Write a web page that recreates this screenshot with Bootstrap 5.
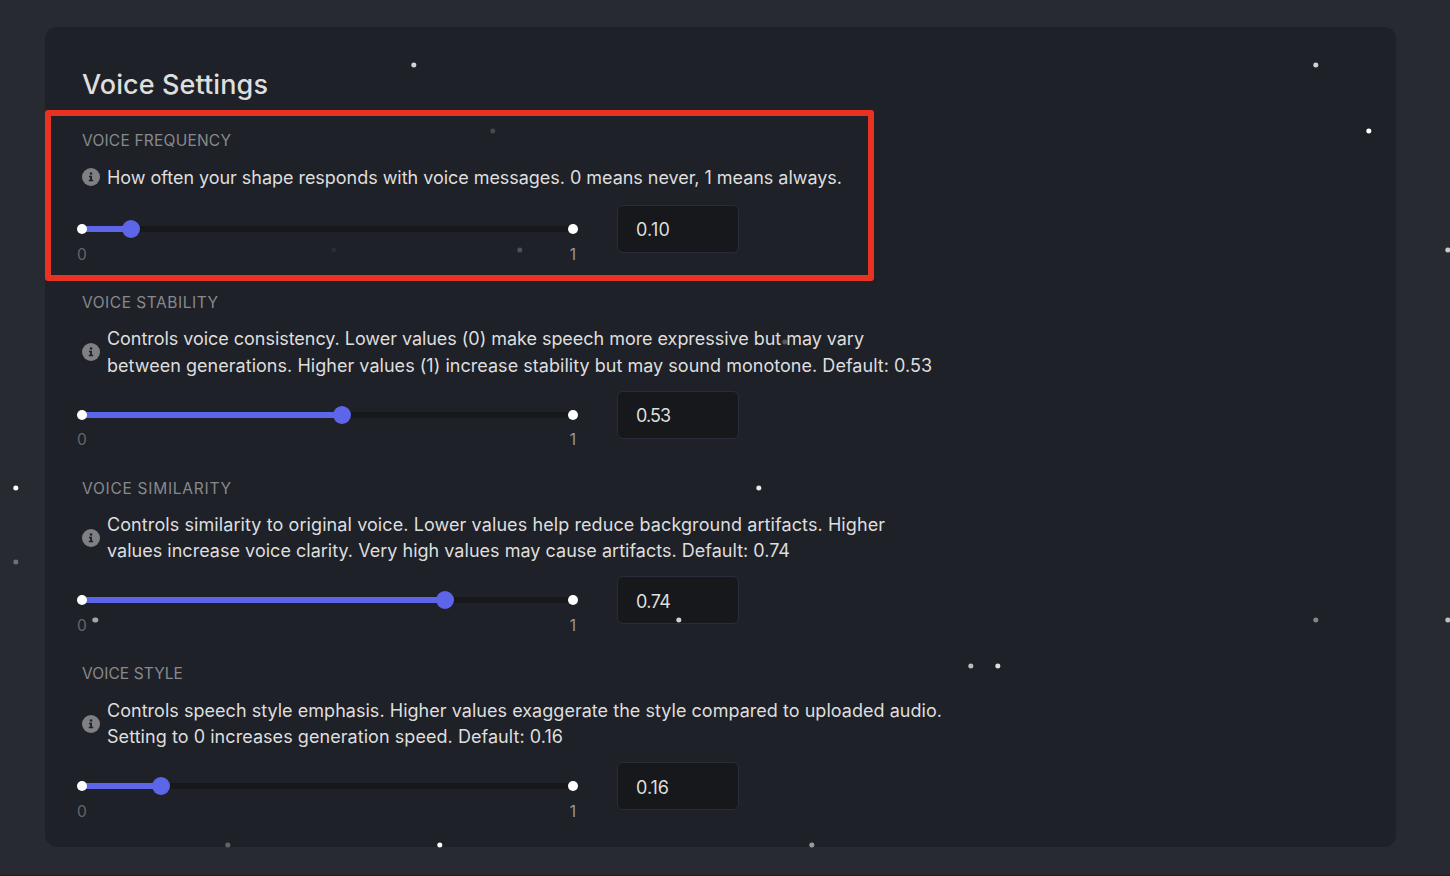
<!DOCTYPE html>
<html lang="en" data-bs-theme="dark">
<head>
<meta charset="utf-8">
<meta name="viewport" content="width=device-width, initial-scale=1">
<title>Voice Settings</title>
<link href="https://cdn.jsdelivr.net/npm/bootstrap@5.3.0/dist/css/bootstrap.min.css" rel="stylesheet">
<style>
  body { background: #282a32; color: #dedede; font-family: Inter, Lato, sans-serif; height: 876px; overflow: hidden; }
  .page { height: 876px; padding: 27px 54px 29px 45px; border-bottom: 1px solid #21192a; }
  .panel { background: #1f2128; border-radius: 12px; padding: 38px 37px 0; height: 820px; }
  .panel-title { font-size: 27px; font-weight: 500; line-height: 40px; letter-spacing: .1px; margin: 0 0 26px; color: #dedede; }
  .setting { margin-bottom: 39.7px; }
  .setting-label { font-size: 15.5px; line-height: 20px; color: #88898c; margin-bottom: 12.5px; }
  .hint { gap: 7px; font-size: 18px; line-height: 26.4px; margin-bottom: 11.6px; }
  .hint-text { padding-top: 1px; }
  .first .hint { margin-bottom: 14px; }
  .first { margin-bottom: 40px; }
  .hint svg { width: 18px; height: 18px; }
  .hint span { display: block; white-space: nowrap; }
  .controls { gap: 44px; height: 48px; }
  .slider { width: 491px; height: 6px; background: #17181c; }
  .slider-fill { height: 6px; background: #5d65e8; }
  .knob { width: 18px; height: 18px; background: #5d65e8; }
  .stop { width: 10px; height: 10px; background: #fff; }
  .stop-label { font-size: 15.5px; line-height: 20px; top: 18.6px; }
  .value-box { width: 122px; height: 48px; padding: 2px 18px 0; font-size: 18px; background: #17181c; color: #dedede; border: 1px solid #2a2d39; border-radius: 6px; }
  .highlight { left: -37px; top: -21px; width: 829px; height: 171px; border: 6px solid #ea3223; border-radius: 3px; }
  .star { width: 5.4px; height: 5px; background: #fff; border-radius: 50%; transform: translate(-50%, -50%); }
</style>
</head>
<body>
<main class="page position-relative">
  <section class="panel">
    <h1 class="panel-title">Voice Settings</h1>
    <div id="settings"></div>
  </section>
  <div id="stars"></div>
</main>
<script src="https://cdn.jsdelivr.net/npm/bootstrap@5.3.0/dist/js/bootstrap.bundle.min.js"></script>
<script>
  // Each line of copy carries its own tracking in px.
  const settings = [
    { label: ['VOICE FREQUENCY', .22], value: .10, tracking: .2, lines: [['How often your shape responds with voice messages. 0 means never, 1 means always.', -.037]] },
    { label: ['VOICE STABILITY', .53], value: .53, tracking: -.9, lines: [['Controls voice consistency. Lower values (0) make speech more expressive but may vary', -.039], ['between generations. Higher values (1) increase stability but may sound monotone. Default: 0.53', .031]] },
    { label: ['VOICE SIMILARITY', .74], value: .74, tracking: -.6, lines: [['Controls similarity to original voice. Lower values help reduce background artifacts. Higher', .089], ['values increase voice clarity. Very high values may cause artifacts. Default: 0.74', .02]] },
    { label: ['VOICE STYLE', .09], value: .16, tracking: 0, lines: [['Controls speech style emphasis. Higher values exaggerate the style compared to uploaded audio.', .033], ['Setting to 0 increases generation speed. Default: 0.16', .056]] }
  ];
  const info = '<svg class="flex-shrink-0" viewBox="0 0 18 18" aria-hidden="true"><circle cx="9" cy="9" r="9" fill="#7f8084"/><circle cx="9" cy="5.5" r="1.25" fill="#1f2128"/><path d="M7 7.7h3v4h1.2v1.6H6.8v-1.6h1.3V9.3H7z" fill="#1f2128"/></svg>';
  const dot = 'position-absolute top-50 translate-middle rounded-circle';
  document.getElementById('settings').innerHTML = settings.map((s, i) => `
    <div class="setting position-relative ${i ? '' : 'first'}">
      <div class="setting-label" style="letter-spacing:${s.label[1]}px">${s.label[0]}</div>
      <div class="hint d-flex align-items-center">${info}<div class="hint-text">${s.lines.map(l => `<span style="letter-spacing:${l[1]}px">${l[0]}</span>`).join('')}</div></div>
      <div class="controls d-flex align-items-center">
        <div class="slider position-relative">
          <div class="slider-fill" style="width:${s.value * 100}%"></div>
          <span class="stop start-0 ${dot}"></span><span class="stop start-100 ${dot}"></span>
          <span class="knob ${dot}" style="left:${s.value * 100}%"></span>
          <span class="stop-label position-absolute start-0 translate-middle-x" style="color:#65666a">0</span>
          <span class="stop-label position-absolute start-100 translate-middle-x" style="color:#98999b">1</span>
        </div>
        <input class="value-box" type="text" aria-label="${s.label[0]}" value="${s.value.toFixed(2)}" style="letter-spacing:${s.tracking}px">
      </div>
      ${i ? '' : '<div class="highlight position-absolute pe-none"></div>'}
    </div>`).join('');

  // Background stars: x, y, opacity
  const stars = [[413.5,65,.8],[1316,65,.8],[1368.5,131,1],[493,131,.18],[334,250,.05],[519.5,250,.22],[1448,250,.75],[15.5,488,1],[758.5,488,.9],[15.5,562,.33],[785,342,.25],[95.3,620,.6],[678.5,620,.8],[1316,620,.45],[1448,620,.7],[970.5,666,.7],[997.5,666,.85],[228,845,.3],[440,845,1],[811.5,845,.55]];
  document.getElementById('stars').innerHTML = stars.map(([x, y, o]) => `<i class="star position-absolute" style="left:${x}px;top:${y}px;opacity:${o}"></i>`).join('');
</script>
</body>
</html>
